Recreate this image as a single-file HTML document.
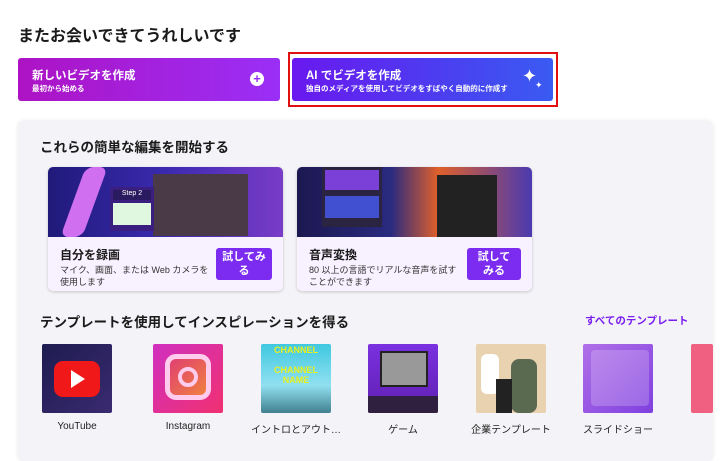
<!DOCTYPE html>
<html><head><meta charset="utf-8"><style>
*{margin:0;padding:0;box-sizing:border-box}
body{width:720px;height:450px;overflow:hidden;background:#fff;font-family:"Liberation Sans","Noto Sans CJK JP",sans-serif;color:#1a1a1a;position:relative}
.a{position:absolute}
.h1{left:18px;top:22px;font-size:16px;font-weight:bold}
.b{top:58px;height:43px;border-radius:3px;color:#fff}
.b .t{position:absolute;left:14px;top:9px;font-size:11.5px;font-weight:bold}
.b .s{position:absolute;left:14px;top:25px;font-size:7.5px;font-weight:bold;white-space:nowrap}
.panel{left:18px;top:121px;width:695px;height:340px;background:#f4f4f8;border-radius:6px;box-shadow:0 0 4px rgba(0,0,0,.1)}
.h2{font-size:13.5px;font-weight:bold}
.card{top:167px;width:235px;height:124px;background:#f8f1ff;border-radius:5px;box-shadow:0 1px 3px rgba(0,0,0,.18);overflow:hidden}
.card .img{position:absolute;left:0;top:0;width:100%;height:70px}
.card .ti{position:absolute;left:12px;top:79px;font-size:12px;font-weight:bold}
.card .de{position:absolute;left:12px;top:97px;width:155px;font-size:9px;line-height:12px;color:#333}
.card .bt{position:absolute;left:168px;top:81px;width:56px;height:32px;background:#7c2cf0;border-radius:3px;color:#fff;font-size:11px;font-weight:bold;text-align:center;line-height:14px;padding-top:2px}
.th{top:344px;width:70px;height:69px;border-radius:2px;overflow:hidden}
.lb{top:421px;width:90px;text-align:center;font-size:10px;color:#222}
</style></head><body>
<div class="a h1">またお会いできてうれしいです</div>
<div class="a b" style="left:18px;width:262px;background:linear-gradient(90deg,#ad13c4,#9a2ff6)">
<div class="t">新しいビデオを作成</div><div class="s">最初から始める</div>
<div class="a" style="left:232px;top:14px;width:14px;height:14px;border-radius:50%;background:#fff;color:#9a2ff6;font-size:13px;font-weight:bold;line-height:14px;text-align:center">+</div></div>
<div class="a" style="left:288px;top:52px;width:270px;height:55px;border:2px solid #e01010"></div>
<div class="a b" style="left:292px;width:261px;background:linear-gradient(90deg,#6a18ef,#4a40f0 60%,#3a5bf2)">
<div class="t">AI でビデオを作成</div><div class="s">独自のメディアを使用してビデオをすばやく自動的に作成す</div>
<div class="a" style="left:230px;top:8px;font-size:18px;color:#fff">✦</div><div class="a" style="left:243px;top:22px;font-size:9px;color:#fff">✦</div></div>
<div class="a panel"></div>
<div class="a h2" style="left:40px;top:136px">これらの簡単な編集を開始する</div>
<div class="a card" style="left:48px"><div class="img" style="background:linear-gradient(90deg,#201a7a,#3a2ab0 50%,#7a3cc8)">
<div class="a" style="left:25px;top:0;width:22px;height:70px;background:#d070f0;transform:skewX(-20deg);border-radius:8px"></div>
<div class="a" style="left:105px;top:7px;width:95px;height:62px;background:#4a3a48"></div>
<div class="a" style="left:62px;top:20px;width:44px;height:44px;background:#3a1f80"><div style="margin:3px;height:10px;background:#2a1a60;color:#fff;font-size:7px;text-align:center">Step 2</div><div style="margin:3px;height:22px;background:#e0f8e0"></div></div></div>
<div class="ti">自分を録画</div><div class="de">マイク、画面、または Web カメラを使用します</div><div class="bt">試してみ<br>る</div></div>
<div class="a card" style="left:297px"><div class="img" style="background:linear-gradient(90deg,#1c1850,#2a2a80 40%,#e0602a 60%,#4a3ab0)">
<div class="a" style="left:25px;top:0;width:60px;height:60px;background:#2a2440"><div style="margin:3px;height:20px;background:#7a40d8"></div><div style="margin:6px 3px;height:22px;background:#4050d0"></div></div>
<div class="a" style="left:140px;top:8px;width:60px;height:62px;background:#222"></div></div>
<div class="ti">音声変換</div><div class="de">80 以上の言語でリアルな音声を試すことができます</div><div class="bt" style="left:170px;width:54px">試して<br>みる</div></div>
<div class="a h2" style="left:40px;top:311px">テンプレートを使用してインスピレーションを得る</div>
<div class="a" style="left:585px;top:313px;font-size:10.5px;font-weight:bold;color:#7a1ff0">すべてのテンプレート</div>
<div class="a th" style="left:42px;background:linear-gradient(135deg,#1e1c50,#3a2a70)"><div class="a" style="left:12px;top:17px;width:46px;height:36px;background:#f01818;border-radius:9px"></div><div class="a" style="left:29px;top:26px;border-left:14px solid #fff;border-top:9px solid transparent;border-bottom:9px solid transparent"></div></div>
<div class="a th" style="left:153px;background:linear-gradient(135deg,#d030c0,#f03070)"><div class="a" style="left:12px;top:10px;width:46px;height:46px;border-radius:11px;background:linear-gradient(135deg,#e04070,#f08040);border:5px solid #fce"></div><div class="a" style="left:25px;top:23px;width:20px;height:20px;border-radius:50%;border:4px solid #fce"></div></div>
<div class="a th" style="left:261px;background:linear-gradient(#40c8e0,#90e0f0 60%,#408090)"><div style="color:#e8f020;font-weight:bold;font-size:9px;text-align:center;line-height:10px;padding-top:1px">CHANNEL<br><br>CHANNEL<br>NAME</div></div>
<div class="a th" style="left:368px;background:linear-gradient(#7a30e0,#6020b0)"><div class="a" style="left:12px;top:7px;width:48px;height:36px;background:#999;border:2px solid #222"></div><div class="a" style="left:0;top:52px;width:70px;height:17px;background:#302040"></div></div>
<div class="a th" style="left:476px;background:#e8d2b0"><div class="a" style="left:35px;top:15px;width:26px;height:54px;background:#5a6a50;border-radius:8px"></div><div class="a" style="left:5px;top:10px;width:18px;height:40px;background:#fff;border-radius:6px"></div><div class="a" style="left:20px;top:35px;width:16px;height:34px;background:#222"></div></div>
<div class="a th" style="left:583px;background:linear-gradient(135deg,#b070e8,#8040e0)"><div class="a" style="left:8px;top:6px;width:58px;height:56px;background:rgba(255,255,255,.2);border-radius:4px"></div></div>
<div class="a th" style="left:691px;width:22px;background:#f06080"></div>
<div class="a lb" style="left:32px">YouTube</div>
<div class="a lb" style="left:143px">Instagram</div>
<div class="a lb" style="left:251px">イントロとアウト…</div>
<div class="a lb" style="left:358px">ゲーム</div>
<div class="a lb" style="left:466px">企業テンプレート</div>
<div class="a lb" style="left:573px">スライドショー</div>
</body></html>
